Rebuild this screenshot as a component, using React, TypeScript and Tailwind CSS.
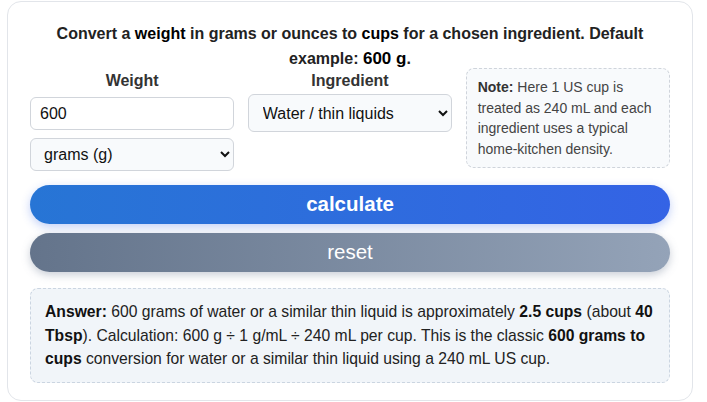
import React, { useState } from 'react';

const font = { fontFamily: '"Liberation Sans", Arial, sans-serif' };

export default function App(): React.ReactElement {
  const [weight, setWeight] = useState<string>('600');
  const [unit, setUnit] = useState<string>('g');
  const [ingredient, setIngredient] = useState<string>('water');

  return (
    <div className="min-h-[402px] bg-white pt-px" style={font}>
      <div className="ml-[7px] w-[686px] rounded-[14px] border border-[#e2e5ea] bg-white px-[22px] pt-[19px] pb-[17px]">
        <h2 className="text-center text-[16px] leading-[25px] font-bold text-[#222]">
          Convert a <strong className="text-black">weight</strong> in grams or ounces to{' '}
          <strong className="text-black">cups</strong> for a chosen ingredient. Default example:{' '}
          <strong className="text-[17px] text-black">600 g</strong>.
        </h2>

        <div className="-mt-[1px] grid grid-cols-3 gap-x-[13.5px]">
          <div className="flex flex-col">
            <label className="pt-[1px] text-center text-[16px] leading-[20px] font-bold text-[#333]">Weight</label>
            <input
              value={weight}
              onChange={(e) => setWeight(e.target.value)}
              className="mt-[6px] h-[33px] rounded-[6px] border border-[#d1d5db] bg-white px-[9px] text-[16px] text-[#111] outline-none"
            />
            <select
              value={unit}
              onChange={(e) => setUnit(e.target.value)}
              className="mt-[8px] h-[33px] rounded-[6px] border border-[#d1d5db] bg-[#f8fafc] px-[9px] text-[16px] text-[#111]"
            >
              <option value="g">grams (g)</option>
              <option value="oz">ounces (oz)</option>
            </select>
          </div>

          <div className="flex flex-col">
            <label className="pt-[1px] text-center text-[16px] leading-[20px] font-bold text-[#333]">Ingredient</label>
            <select
              value={ingredient}
              onChange={(e) => setIngredient(e.target.value)}
              className="mt-[3px] h-[38px] rounded-[6px] border border-[#d1d5db] bg-[#f8fafc] px-[10px] text-[16px] text-[#111]"
            >
              <option value="water">Water / thin liquids</option>
              <option value="flour">All-purpose flour</option>
              <option value="sugar">Granulated sugar</option>
            </select>
          </div>

          <div className="-mt-[2px] h-[100px] rounded-[8px] border border-dashed border-[#cfd4db] bg-[#f8fafc] px-[11px] pt-[8px] text-[14px] leading-[20.5px] text-[#444]">
            <strong className="text-[#333]">Note:</strong> Here 1 US cup is treated as 240 mL and each ingredient uses a typical
            home-kitchen density.
          </div>
        </div>

        <div className="mt-[14px] flex flex-col gap-[9px]">
          <button className="h-[39px] rounded-full bg-gradient-to-r from-[#2775d5] to-[#3463e5] text-[20.5px] font-bold text-white shadow-[0_3px_10px_rgba(52,99,229,0.3)]">
            calculate
          </button>
          <button className="h-[39px] rounded-full bg-gradient-to-r from-[#64748b] to-[#94a3b8] text-[20.5px] text-white shadow-[0_3px_8px_rgba(100,116,139,0.35)]">
            reset
          </button>
        </div>

        <div className="mt-[16px] rounded-[8px] border border-dashed border-[#cbd5e1] bg-[#f1f5f9] px-[14px] pt-[11px] pb-[11px] text-[15.7px] leading-[23.5px] text-[#222]">
          <strong className="text-[#111]">Answer:</strong> 600 grams of water or a similar thin liquid is approximately{' '}
          <strong className="text-[#111]">2.5 cups</strong> (about <strong className="text-[#111]">40 Tbsp</strong>).
          Calculation: 600 g ÷ 1 g/mL ÷ 240 mL per cup. This is the classic{' '}
          <strong className="text-[#111]">600 grams to cups</strong> conversion for water or a similar thin liquid using a
          240 mL US cup.
        </div>
      </div>
    </div>
  );
}
